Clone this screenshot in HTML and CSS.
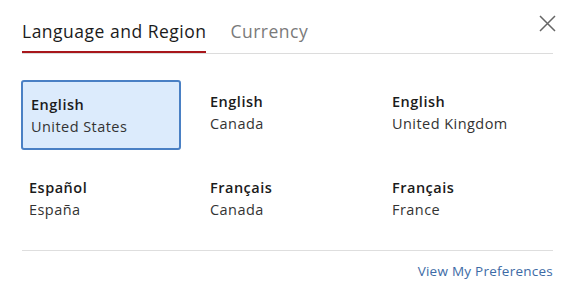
FILE: index.html
```html
<!DOCTYPE html>
<html lang="en">
<head>
<meta charset="utf-8">
<title>Language and Region</title>
<link rel="stylesheet" href="styles.css">
</head>
<body>
<div class="dialog">
  <button class="close" aria-label="Close">
    <svg width="17" height="17" viewBox="0 0 17 17"><path d="M1 1L16 16M16 1L1 16" stroke="#666" stroke-width="1.5" fill="none"/></svg>
  </button>
  <div class="tabs">
    <div class="tab active">Language and Region</div>
    <div class="tab">Currency</div>
  </div>
  <div class="options">
    <div class="option selected"><div class="lang">English</div><div class="region">United States</div></div>
    <div class="option"><div class="lang">English</div><div class="region">Canada</div></div>
    <div class="option"><div class="lang">English</div><div class="region">United Kingdom</div></div>
    <div class="option"><div class="lang">Español</div><div class="region">España</div></div>
    <div class="option"><div class="lang">Français</div><div class="region">Canada</div></div>
    <div class="option"><div class="lang">Français</div><div class="region">France</div></div>
  </div>
  <div class="footer">
    <a class="prefs" href="#">View My Preferences</a>
  </div>
</div>
</body>
</html>
```
FILE: styles.css
```css
html, body {
  margin: 0;
  padding: 0;
  background: #fff;
}
body {
  font-family: "Open Sans", "Noto Sans", sans-serif;
  color: #1b1b1b;
}
.dialog {
  position: relative;
  width: 575px;
  height: 300px;
  box-sizing: border-box;
  padding: 0 22px;
}
.close {
  position: absolute;
  top: 15px;
  right: 19px;
  width: 17px;
  height: 17px;
  padding: 0;
  border: 0;
  background: none;
  display: flex;
}
.tabs {
  display: flex;
  gap: 24px;
  border-bottom: 1px solid #dcdcdc;
}
.tab {
  font-size: 17.5px;
  line-height: 20px;
  padding: 21px 0 10px;
  color: #7a7a7a;
  border-bottom: 2px solid transparent;
  letter-spacing: 0.5px;
}
.tab.active {
  color: #1b1b1b;
  border-bottom-color: #a8161b;
  font-weight: 500;
}
.options {
  display: grid;
  grid-template-columns: 170px 171px 1fr;
  column-gap: 11px;
  row-gap: 16px;
  margin: 26px 0 0 -1px;
  align-items: start;
}
.option {
  width: 160px;
  box-sizing: border-box;
  padding: 11px 8px 11px;
}
.option.selected {
  border: 2px solid #4a80c4;
  border-radius: 3px;
  background: #dcebfc;
  padding: 12px 8px 11px;
  height: 70px;
}
.lang {
  font-size: 14.5px;
  line-height: 22px;
  font-weight: 600;
  color: #1b1b1b;
  letter-spacing: 0.5px;
}
.region {
  font-size: 14.5px;
  line-height: 22px;
  color: #333;
  letter-spacing: 0.45px;
}
.footer {
  margin-top: 18px;
  border-top: 1px solid #dedede;
  display: flex;
  justify-content: flex-end;
  padding-top: 11px;
}
.prefs {
  font-size: 13.5px;
  line-height: 18px;
  font-weight: 500;
  color: #3d6ba6;
  text-decoration: none;
  letter-spacing: 0.25px;
}
```
